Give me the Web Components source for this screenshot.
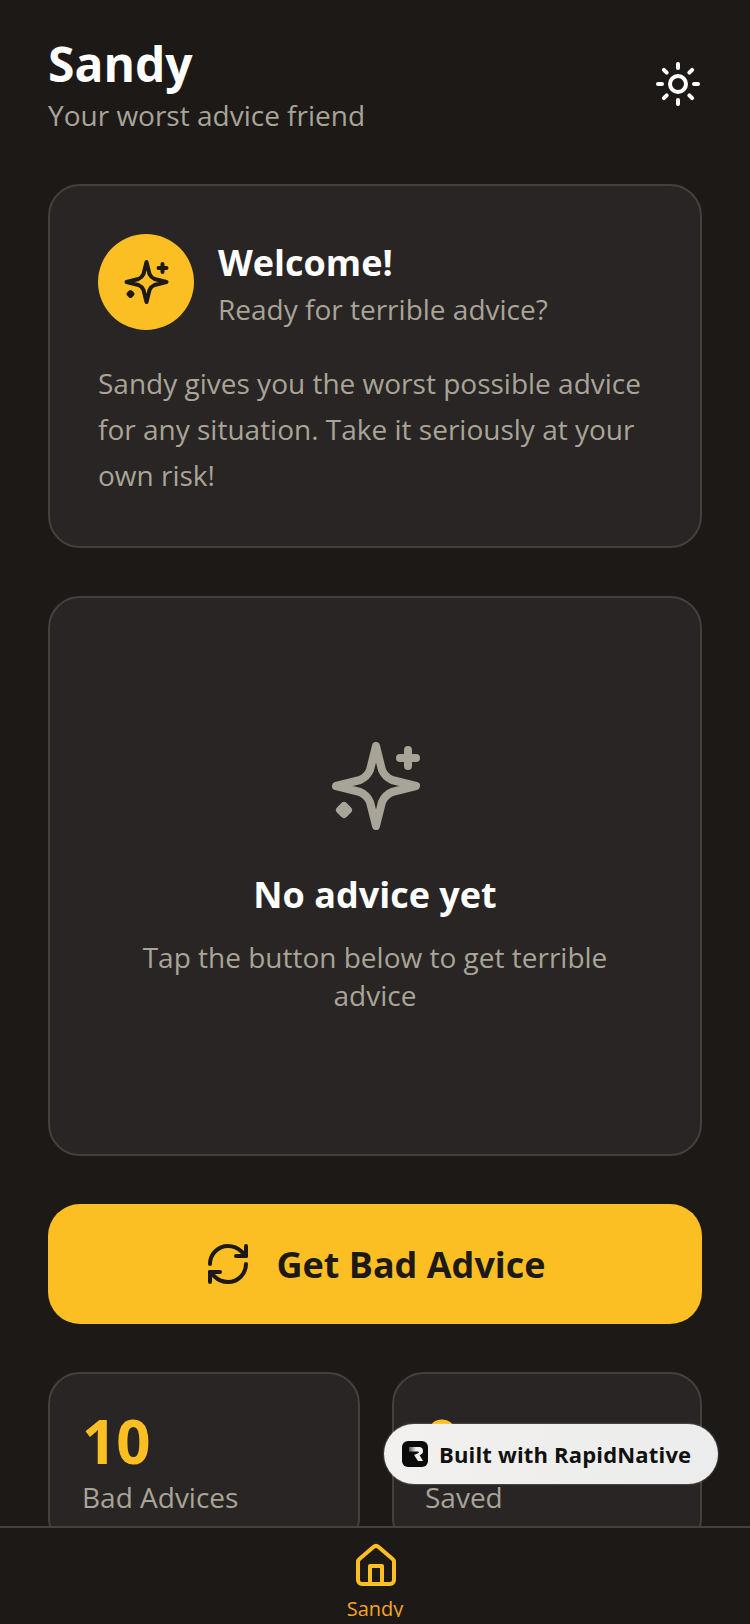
<!doctype html>
<html>
<head>
<meta charset="utf-8">
<title>Sandy</title>
<style>
  html, body { margin: 0; height: 100%; background: #1c1917; }
  body { font-family: "Open Sans", sans-serif; color: #fff; }
</style>
</head>
<body>
<sandy-app>
  <sandy-header slot="header" title="Sandy" subtitle="Your worst advice friend"></sandy-header>
  <welcome-card></welcome-card>
  <empty-advice></empty-advice>
  <advice-button>Get Bad Advice</advice-button>
  <stats-row>
    <stat-card value="10" label="Bad Advices"></stat-card>
    <stat-card value="0" label="Saved"></stat-card>
  </stats-row>
  <built-badge slot="overlay"></built-badge>
  <tab-bar slot="nav"></tab-bar>
</sandy-app>

<script>
const SPARKLE = `
  <path d="M49 8L55 32Q58 39 65 42L89 48L65 54Q58 57 55 64L49 88L43 64Q40 57 33 54L9 48L33 42Q40 39 43 32Z" fill="none" stroke="currentColor" stroke-width="8" stroke-linejoin="round"/>
  <path d="M81 12V28M73 20H89" fill="none" stroke="currentColor" stroke-width="8" stroke-linecap="round"/>
  <path d="M17 68L21 72L17 76L13 72Z" fill="currentColor" stroke="currentColor" stroke-width="8" stroke-linejoin="round"/>`;

class SandyApp extends HTMLElement {
  constructor() {
    super();
    this.attachShadow({ mode: 'open' });
    this.shadowRoot.innerHTML = `
      <style>
        :host {
          display: flex;
          flex-direction: column;
          position: relative;
          height: 1624px;
          overflow: hidden;
          background: #1c1917;
        }
        .scroll {
          flex: 1;
          min-height: 0;
          overflow: hidden;
          display: flex;
          flex-direction: column;
          gap: 48px;
          padding: 0 48px;
        }
        ::slotted(*) { flex-shrink: 0; }
      </style>
      <div class="scroll">
        <slot name="header"></slot>
        <slot></slot>
      </div>
      <slot name="nav"></slot>
      <slot name="overlay"></slot>
    `;
  }
}

class SandyHeader extends HTMLElement {
  constructor() {
    super();
    this.attachShadow({ mode: 'open' });
  }

  connectedCallback() {
    this.shadowRoot.innerHTML = `
      <style>
        :host {
          display: flex;
          align-items: center;
          justify-content: space-between;
          padding-top: 32px;
          padding-bottom: 2px;
        }
        h1 { margin: 0; font-size: 48px; line-height: 64px; font-weight: 700; color: #fff; }
        p { margin: 0; font-size: 28px; line-height: 38px; color: #a8a497; }
        svg { display: block; width: 48px; height: 48px; margin-top: 2px; }
      </style>
      <div>
        <h1>${this.getAttribute('title')}</h1>
        <p>${this.getAttribute('subtitle')}</p>
      </div>
      <svg viewBox="0 0 24 24" fill="none" stroke="#fff" stroke-width="2" stroke-linecap="round" stroke-linejoin="round">
        <circle cx="12" cy="12" r="4"/>
        <path d="M12 2v2"/><path d="M12 20v2"/>
        <path d="m4.93 4.93 1.41 1.41"/><path d="m17.66 17.66 1.41 1.41"/>
        <path d="M2 12h2"/><path d="M20 12h2"/>
        <path d="m6.34 17.66-1.41 1.41"/><path d="m19.07 4.93-1.41 1.41"/>
      </svg>
    `;
  }
}

class WelcomeCard extends HTMLElement {
  constructor() {
    super();
    this.attachShadow({ mode: 'open' });
    this.shadowRoot.innerHTML = `
      <style>
        :host {
          display: block;
          box-sizing: border-box;
          padding: 48px;
          background: #292524;
          border: 2px solid #44403c;
          border-radius: 32px;
        }
        .top { display: flex; align-items: center; gap: 24px; margin-bottom: 30px; }
        .circle {
          width: 96px;
          height: 96px;
          border-radius: 50%;
          background: #fbbf24;
          color: #1c1917;
          display: flex;
          align-items: center;
          justify-content: center;
        }
        .circle svg { width: 48px; height: 48px; display: block; }
        .text { padding-top: 4px; }
        h2 { margin: 0 0 2px; font-size: 36px; line-height: 48px; font-weight: 700; color: #fff; }
        .sub { margin: 0; font-size: 28px; line-height: 40px; color: #a8a497; }
        .body { margin: 0; font-size: 28px; line-height: 46px; color: #a8a497; }
      </style>
      <div class="top">
        <div class="circle"><svg viewBox="0 0 96 96">${SPARKLE}</svg></div>
        <div class="text">
          <h2>Welcome!</h2>
          <p class="sub">Ready for terrible advice?</p>
        </div>
      </div>
      <p class="body">Sandy gives you the worst possible advice for any situation. Take it seriously at your own risk!</p>
    `;
  }
}

class EmptyAdvice extends HTMLElement {
  constructor() {
    super();
    this.attachShadow({ mode: 'open' });
    this.shadowRoot.innerHTML = `
      <style>
        :host {
          display: flex;
          flex-direction: column;
          align-items: center;
          justify-content: center;
          box-sizing: border-box;
          height: 560px;
          padding: 48px;
          background: #292524;
          border: 2px solid #44403c;
          border-radius: 32px;
          text-align: center;
        }
        svg { width: 96px; height: 96px; display: block; color: #a8a497; margin-bottom: 37px; }
        h3 { margin: 0 0 19px; font-size: 36px; line-height: 48px; font-weight: 700; color: #fff; }
        p { margin: 0; font-size: 28px; line-height: 38px; color: #a8a497; }
      </style>
      <svg viewBox="0 0 96 96">${SPARKLE}</svg>
      <h3>No advice yet</h3>
      <p>Tap the button below to get terrible advice</p>
    `;
  }
}

class AdviceButton extends HTMLElement {
  constructor() {
    super();
    this.attachShadow({ mode: 'open' });
    this.shadowRoot.innerHTML = `
      <style>
        :host {
          display: flex;
          align-items: center;
          justify-content: center;
          gap: 24px;
          height: 120px;
          background: #fbbf24;
          color: #1c1917;
          border-radius: 32px;
          font-size: 36px;
          font-weight: 700;
        }
        svg { width: 48px; height: 48px; display: block; }
      </style>
      <svg viewBox="0 0 24 24" fill="none" stroke="currentColor" stroke-width="2" stroke-linecap="round" stroke-linejoin="round">
        <path d="M3 12a9 9 0 0 1 9-9 9.750 9.750 0 0 1 6.740 2.740L21 8"/>
        <path d="M21 3v5h-5"/>
        <path d="M21 12a9 9 0 0 1-9 9 9.750 9.750 0 0 1-6.740-2.740L3 16"/>
        <path d="M8 16H3v5"/>
      </svg>
      <slot></slot>
    `;
  }
}

class StatsRow extends HTMLElement {
  constructor() {
    super();
    this.attachShadow({ mode: 'open' });
    this.shadowRoot.innerHTML = `
      <style>
        :host { display: grid; grid-template-columns: 312fr 310fr; gap: 32px; }
      </style>
      <slot></slot>
    `;
  }
}

class StatCard extends HTMLElement {
  constructor() {
    super();
    this.attachShadow({ mode: 'open' });
  }

  connectedCallback() {
    this.shadowRoot.innerHTML = `
      <style>
        :host {
          display: block;
          padding: 32px;
          background: #292524;
          border: 2px solid #44403c;
          border-radius: 32px;
        }
        :host(:last-child) { padding-left: 31px; }
        .value { font-size: 60px; line-height: 70px; font-weight: 700; color: #fbbf24; }
        .label { margin-top: 2px; font-size: 28px; line-height: 38px; color: #a8a497; }
      </style>
      <div class="value">${this.getAttribute('value')}</div>
      <div class="label">${this.getAttribute('label')}</div>
    `;
  }
}

class TabBar extends HTMLElement {
  constructor() {
    super();
    this.attachShadow({ mode: 'open' });
    this.shadowRoot.innerHTML = `
      <style>
        :host {
          display: block;
          flex-shrink: 0;
          box-sizing: border-box;
          height: 98px;
          padding-top: 14px;
          background: #1c1917;
          border-top: 2px solid #44403c;
          color: #fbbf24;
        }
        .tab {
          display: flex;
          flex-direction: column;
          align-items: center;
          height: 75px;
          overflow: hidden;
        }
        svg { width: 48px; height: 48px; display: block; flex-shrink: 0; margin-left: 2px; }
        span { font-size: 20px; line-height: 28px; margin-top: 5px; white-space: nowrap; color: #f5a623; }
      </style>
      <div class="tab">
        <svg viewBox="0 0 24 24" fill="none" stroke="currentColor" stroke-width="2" stroke-linecap="round" stroke-linejoin="round">
          <path d="M3 10a2 2 0 0 1 .709-1.528l7-5.999a2 2 0 0 1 2.582 0l7 5.999A2 2 0 0 1 21 10v9a2 2 0 0 1-2 2H5a2 2 0 0 1-2-2z"/>
          <path d="M15 21v-9H9v9"/>
        </svg>
        <span>Sandy</span>
      </div>
    `;
  }
}

class BuiltBadge extends HTMLElement {
  constructor() {
    super();
    this.attachShadow({ mode: 'open' });
    this.shadowRoot.innerHTML = `
      <style>
        :host {
          position: absolute;
          left: 384px;
          top: 1424px;
          box-sizing: border-box;
          width: 334px;
          height: 60px;
          display: flex;
          align-items: center;
          gap: 11px;
          padding-left: 18px;
          background: linear-gradient(100deg, #f2f1ef, #ececec);
          border-radius: 30px;
          color: #111;
          font-size: 22px;
          font-weight: 700;
          letter-spacing: 0.17px;
          white-space: nowrap;
          box-shadow: 0 0 2px rgba(255, 255, 255, 0.5);
        }
        svg { width: 26px; height: 26px; display: block; flex-shrink: 0; }
      </style>
      <svg viewBox="0 0 26 26">
        <defs>
          <linearGradient id="fade" x1="0" x2="1" y1="0" y2="0">
            <stop offset="0" stop-color="#555"/>
            <stop offset="0.5" stop-color="#f2f2f2"/>
          </linearGradient>
        </defs>
        <rect width="26" height="26" rx="6" fill="#0b0b0b"/>
        <path d="M7 6H17C20 6 21 8 21 10C21 12 20 13.500 17.500 14L21 20H16L12 14L16.500 12C17 11.500 17 10.500 16 10.500H7Z" fill="url(#fade)"/>
      </svg>
      <span>Built with RapidNative</span>
    `;
  }
}

customElements.define('sandy-app', SandyApp);
customElements.define('sandy-header', SandyHeader);
customElements.define('welcome-card', WelcomeCard);
customElements.define('empty-advice', EmptyAdvice);
customElements.define('advice-button', AdviceButton);
customElements.define('stats-row', StatsRow);
customElements.define('stat-card', StatCard);
customElements.define('tab-bar', TabBar);
customElements.define('built-badge', BuiltBadge);
</script>
</body>
</html>
